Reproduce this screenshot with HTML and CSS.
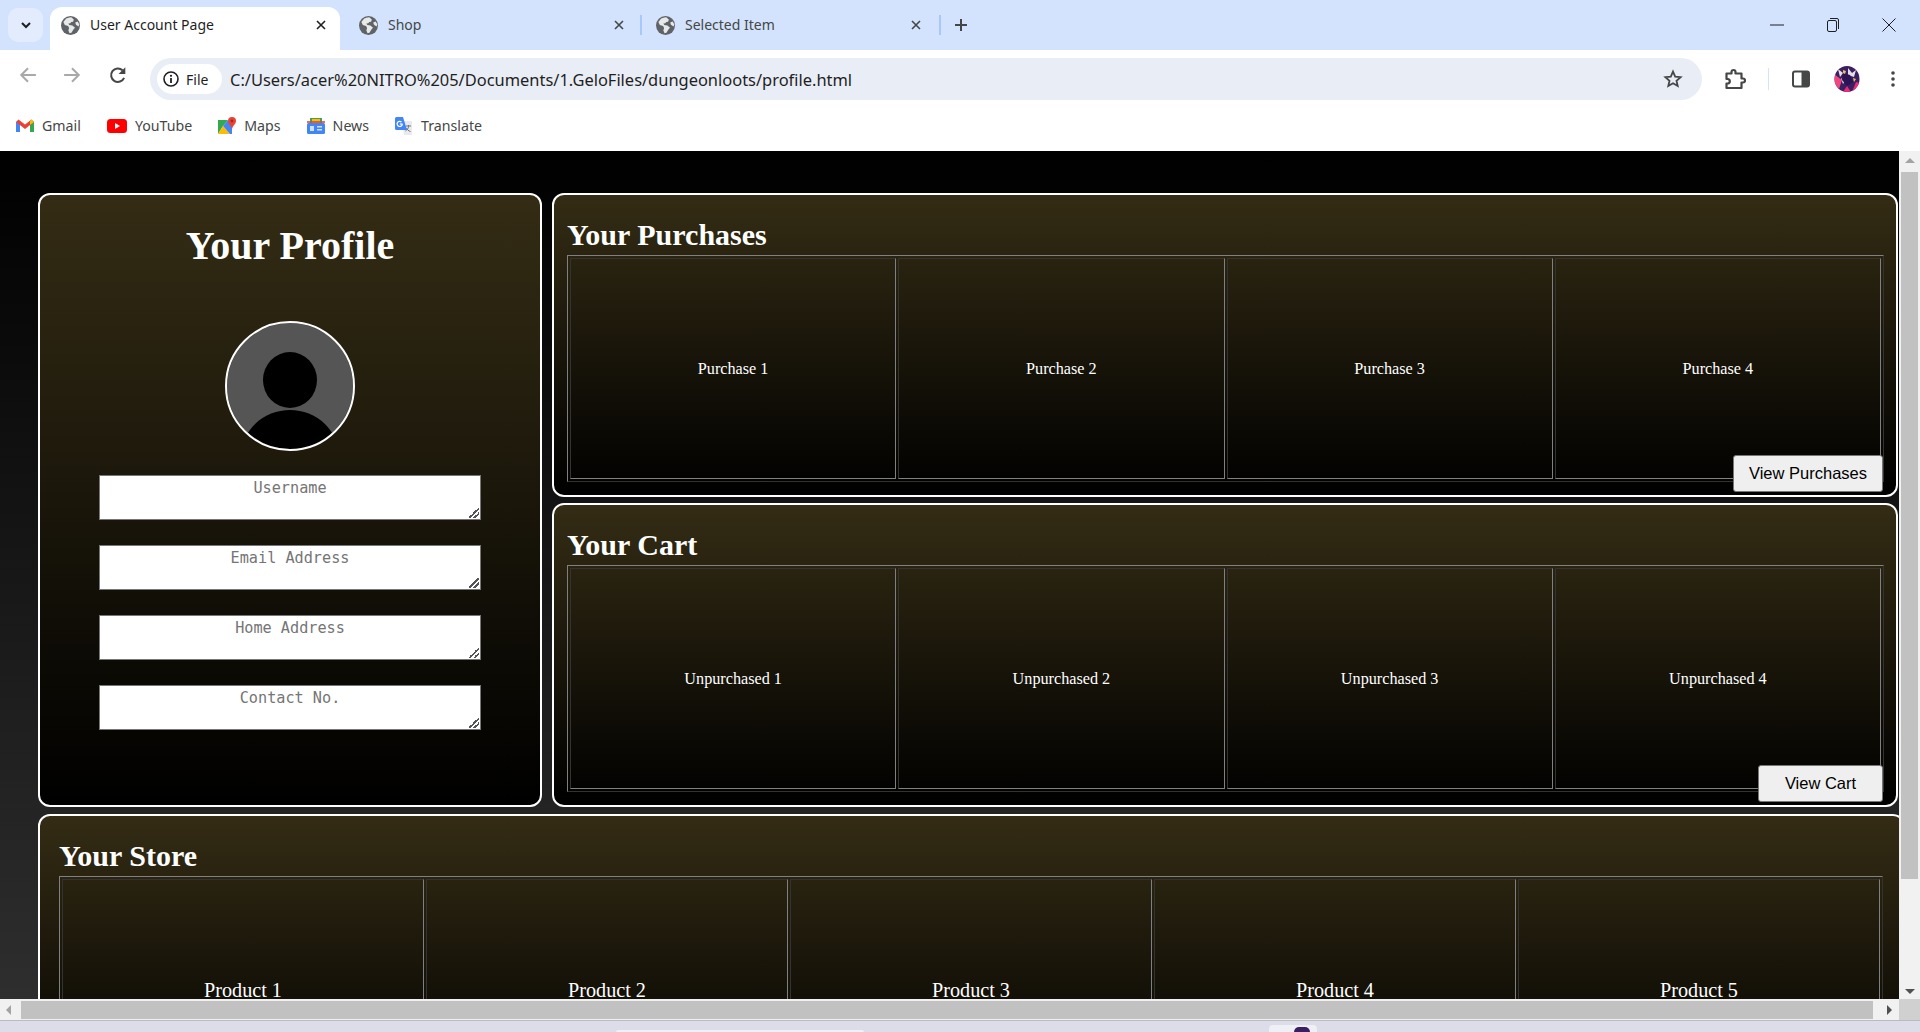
FILE: index.html
```html
<!DOCTYPE html>
<html lang="en">
<head>
  <meta charset="UTF-8">
  <title>User Account Page</title>
  <link rel="stylesheet" href="styles.css">
</head>
<body>
  <svg class="sprites" width="0" height="0" aria-hidden="true">
    <symbol id="globe" viewBox="0 0 16 16">
      <circle cx="8" cy="8" r="8" fill="#5f6368"/>
      <path d="M7 1.2 4.4 2.2 2 5l1.2 2.6L6 8.4l.8 1.6-.6 2.2 1 2.4 1.6-.4 1.8-3 1.2-1.4-2.2-1.8-2.6-.4-.8-1.2 1.6-.4.8-1 1.6-.2.6-1.8L8.600 1z" fill="#fff" opacity=".85"/>
      <path d="M14 4.600 12 5.400l.6 2 2.200 1.400.6-1.800z" fill="#fff" opacity=".85"/>
    </symbol>
    <symbol id="close" viewBox="0 0 10 10">
      <path d="M1 1l8 8M9 1 1 9" fill="none" stroke="currentColor" stroke-width="1.600"/>
    </symbol>
  </svg>

  <!-- TABS -->
  <header class="tabstrip">
    <button class="tab-list" type="button">
      <svg width="10" height="7" viewBox="0 0 10 7"><path d="M1 1l4 4 4-4" fill="none" stroke="#1f1f1f" stroke-width="2"/></svg>
    </button>
    <div class="tab tab-active">
      <svg class="favicon"><use href="#globe"/></svg>
      <span class="tab-title">User Account Page</span>
      <svg class="tab-close"><use href="#close"/></svg>
    </div>
    <div class="tab">
      <svg class="favicon"><use href="#globe"/></svg>
      <span class="tab-title">Shop</span>
      <svg class="tab-close"><use href="#close"/></svg>
    </div>
    <span class="tab-sep tab-sep-first"></span>
    <div class="tab">
      <svg class="favicon"><use href="#globe"/></svg>
      <span class="tab-title">Selected Item</span>
      <svg class="tab-close"><use href="#close"/></svg>
    </div>
    <span class="tab-sep tab-sep-last"></span>
    <svg class="new-tab" width="14" height="14" viewBox="0 0 14 14"><path d="M7 1v12M1 7h12" stroke="#444746" stroke-width="2"/></svg>
    <div class="window-controls">
      <svg width="14" height="14" viewBox="0 0 14 14"><path d="M0 7h14" stroke="#1f1f1f"/></svg>
      <svg width="14" height="16" viewBox="0 0 14 16"><rect x="1.500" y="3.500" width="9" height="11" rx="1.500" fill="none" stroke="#1f1f1f"/><path d="M4 1.500h7a1.500 1.500 0 0 1 1.500 1.500v9" fill="none" stroke="#1f1f1f"/></svg>
      <svg width="14" height="14" viewBox="0 0 14 14"><path d="M.5.500l13 13M13.500.500l-13 13" stroke="#1f1f1f"/></svg>
    </div>
  </header>

  <!-- TOOLBAR -->
  <nav class="toolbar">
    <svg class="nav-icon" viewBox="0 0 16 16"><path d="M15 8H2.500M8 2 2 8l6 6" fill="none" stroke="#a8a9aa" stroke-width="1.800"/></svg>
    <svg class="nav-icon nav-forward" viewBox="0 0 16 16"><path d="M1 8h12.500M8 2l6 6-6 6" fill="none" stroke="#a8a9aa" stroke-width="1.800"/></svg>
    <svg class="nav-icon" viewBox="0 0 16 16"><path d="M13.400 10.500A6 6 0 1 1 12 3.800" fill="none" stroke="#444746" stroke-width="1.800"/><path d="M14.500 1v6h-6z" fill="#444746"/></svg>
    <div class="omnibox">
      <span class="site-chip">
        <svg width="16" height="16" viewBox="0 0 16 16"><circle cx="8" cy="8" r="7" fill="none" stroke="#1f1f1f" stroke-width="1.600"/><path d="M8 7v5" stroke="#1f1f1f" stroke-width="1.800"/><circle cx="8" cy="4.800" r="1.100" fill="#1f1f1f"/></svg>
        File
      </span>
      <span class="url">C:/Users/acer%20NITRO%205/Documents/1.GeloFiles/dungeonloots/profile.html</span>
      <svg class="star" width="20" height="20" viewBox="0 0 20 20"><path d="M10 2.600l2.200 5 5.400.5-4.100 3.600 1.200 5.300L10 14.200 5.300 17l1.200-5.300-4.100-3.600 5.400-.5z" fill="none" stroke="#444746" stroke-width="1.800"/></svg>
    </div>
    <div class="toolbar-actions">
      <svg width="22" height="22" viewBox="0 0 22 22"><path d="M2.500 5.500h5V4a2 2 0 0 1 4 0v1.500h6v5H19a2 2 0 0 1 0 4h-1.500V20h-15v-4.500H4a2.300 2.300 0 0 0 0-4.500H2.500z" fill="none" stroke="#444746" stroke-width="2.200" stroke-linejoin="round"/></svg>
      <span class="action-sep"></span>
      <svg width="20" height="20" viewBox="0 0 20 20"><rect x="2" y="2.500" width="16" height="15" rx="2" fill="none" stroke="#444746" stroke-width="2"/><rect x="10.500" y="2.500" width="7.500" height="15" fill="#444746"/></svg>
      <svg class="profile-pic" width="26" height="26" viewBox="0 0 26 26">
        <defs><clipPath id="pic"><ellipse cx="13" cy="13" rx="12.500" ry="13"/></clipPath></defs>
        <g clip-path="url(#pic)">
          <rect width="26" height="26" fill="#3b1f63"/>
          <path d="M0 8l8 6-4 12H0z" fill="#f0457f"/>
          <path d="M18 26l4-10 4 1v9zM9 26l4-6 4 6z" fill="#ee2a7b"/>
          <path d="M4 3l5 4-3 4zM14 2l4 5 4-3-2 7-6-2zM7 12l4 3-2 3z" fill="#e6dfe8"/>
          <path d="M9 7l7 2 3 7-6 4-5-6z" fill="#2c1454"/>
          <path d="M9 4l3 1-1 3-2-1zM19 12l3 1-2 3z" fill="#e8c15a"/>
        </g>
      </svg>
      <svg width="4" height="16" viewBox="0 0 4 16"><circle cx="2" cy="2" r="1.800" fill="#444746"/><circle cx="2" cy="8" r="1.800" fill="#444746"/><circle cx="2" cy="14" r="1.800" fill="#444746"/></svg>
    </div>
  </nav>

  <!-- BOOKMARKS -->
  <div class="bookmarks">
    <a class="bookmark">
      <svg width="18" height="14" viewBox="0 0 18 14"><path d="M0 13V2.500L4 5v8z" fill="#4285f4"/><path d="M14 13V5l4-2.500V13z" fill="#34a853"/><path d="M0 3 2.500.500 9 5.500 15.500.500 18 3 9 10z" fill="#ea4335"/><path d="M15.500.500 18 3l-4 3V2z" fill="#fbbc04"/></svg>
      Gmail
    </a>
    <a class="bookmark">
      <svg width="20" height="14" viewBox="0 0 20 14"><rect width="20" height="14" rx="3.500" fill="#f00"/><path d="M8 4l5 3-5 3z" fill="#fff"/></svg>
      YouTube
    </a>
    <a class="bookmark">
      <svg width="18" height="18" viewBox="0 0 18 18"><path d="M0 3h10l-5 6-5 8z" fill="#34a853"/><path d="M5 9 0 17h12z" fill="#fbbc04"/><path d="M10 3 5 9l7 8h2V8z" fill="#4285f4"/><path d="M14 0a4 4 0 0 1 4 4c0 3-3 4-4 8-1-4-4-5-4-8a4 4 0 0 1 4-4z" fill="#ea4335"/><circle cx="14" cy="4" r="1.400" fill="#a52714"/></svg>
      Maps
    </a>
    <a class="bookmark">
      <svg width="18" height="16" viewBox="0 0 18 16"><path d="M3 0h12v6H3z" fill="#34a853"/><path d="M5 1h8v5H5z" fill="#fbbc04"/><path d="M0 3h18v2H0z" fill="#ea4335" opacity=".8"/><rect y="5" width="18" height="11" rx="1.500" fill="#4285f4"/><path d="M3 8h4v5H3zM10 8h5v1.500h-5zM10 11h5v1.500h-5z" fill="#cfe0fc"/></svg>
      News
    </a>
    <a class="bookmark">
      <svg width="18" height="18" viewBox="0 0 18 18"><path d="M7 4h9a1 1 0 0 1 1 1v12a1 1 0 0 1-1 1H9z" fill="#e8eaed"/><path d="M11 9h5M13.500 8v1.500c0 2-1.500 3.500-3 4.500M11.500 11c.5 1.500 2 3 4 3.500" fill="none" stroke="#70757a" stroke-width="1"/><path d="M1.500 0H8l4 13H1.500A1.500 1.500 0 0 1 0 11.500v-10A1.500 1.500 0 0 1 1.500 0z" fill="#4285f4"/><path d="M7.300 7A2.600 2.600 0 1 1 6.500 5" fill="none" stroke="#fff" stroke-width="1.200"/><path d="M4.800 7h2.700" stroke="#fff" stroke-width="1.200"/></svg>
      Translate
    </a>
  </div>

  <div class="browser-view">
    <main class="page">

      <div class="top-row">
        <!-- PROFILE -->
        <section class="panel profile">
          <h1>Your Profile</h1>
          <svg class="avatar" width="130" height="130" viewBox="0 0 130 130">
            <defs><clipPath id="face"><circle cx="65" cy="65" r="63"/></clipPath></defs>
            <circle cx="65" cy="65" r="63" fill="#555"/>
            <g clip-path="url(#face)">
              <ellipse cx="65" cy="59" rx="27" ry="28"/>
              <ellipse cx="65" cy="136" rx="49" ry="47"/>
            </g>
            <circle cx="65" cy="65" r="64" fill="none" stroke="#fff" stroke-width="2"/>
          </svg>
          <form class="profile-form">
            <textarea placeholder="Username"></textarea>
            <textarea placeholder="Email Address"></textarea>
            <textarea placeholder="Home Address"></textarea>
            <textarea placeholder="Contact No."></textarea>
          </form>
        </section>

        <div class="side">
          <!-- PURCHASES -->
          <section class="panel list-panel">
            <h2>Your Purchases</h2>
            <table>
              <tr>
                <td>Purchase 1</td>
                <td>Purchase 2</td>
                <td>Purchase 3</td>
                <td>Purchase 4</td>
              </tr>
            </table>
            <button class="view-btn view-purchases" type="button">View Purchases</button>
          </section>

          <!-- CART -->
          <section class="panel list-panel">
            <h2>Your Cart</h2>
            <table>
              <tr>
                <td>Unpurchased 1</td>
                <td>Unpurchased 2</td>
                <td>Unpurchased 3</td>
                <td>Unpurchased 4</td>
              </tr>
            </table>
            <button class="view-btn view-cart" type="button">View Cart</button>
          </section>
        </div>
      </div>

      <!-- STORE -->
      <section class="panel store">
        <h2>Your Store</h2>
        <table>
          <tr>
            <td>Product 1</td>
            <td>Product 2</td>
            <td>Product 3</td>
            <td>Product 4</td>
            <td>Product 5</td>
          </tr>
        </table>
      </section>

    </main>

    <div class="vscroll">
      <span class="arrow-up"></span>
      <span class="vthumb"></span>
      <span class="arrow-down"></span>
    </div>
    <div class="hscroll">
      <span class="arrow-left"></span>
      <span class="hthumb"></span>
      <span class="arrow-right"></span>
    </div>
    <div class="scroll-corner"></div>
  </div>

  <div class="taskbar-edge">
    <span class="task-thumb"></span>
    <span class="task-button"><span class="task-pic"></span></span>
  </div>
</body>
</html>
```

FILE: styles.css
```css
* {
  box-sizing: border-box;
}

html, body {
  height: 100%;
}

body {
  margin: 0;
  overflow: hidden;
  display: flex;
  flex-direction: column;
  font-family: "Noto Sans", Arial, sans-serif;
  background: #fff;
}

.sprites {
  display: block;
  height: 0;
}

/* tabs */
.tabstrip {
  height: 50px;
  flex: none;
  display: flex;
  align-items: flex-end;
  background: #d3e3fd;
  padding-left: 8px;
}

.tab-list {
  width: 35px;
  height: 34px;
  align-self: flex-start;
  margin: 8px 7px 0 0;
  padding: 0;
  border: none;
  border-radius: 10px;
  background: #e3ecfd;
  display: flex;
  align-items: center;
  justify-content: center;
}

.tab {
  width: 290px;
  height: 43px;
  display: flex;
  align-items: center;
  padding: 0 14px 7px 11px;
  color: #444746;
  font-size: 14px;
}

.tab-active {
  background: #fff;
  color: #1f1f1f;
  border-radius: 12px 12px 0 0;
  margin-right: 8px;
}

.favicon {
  width: 19px;
  height: 19px;
  flex: none;
}

.tab-title {
  flex: 1;
  margin: 0 0 2px 10px;
}

.tab-close {
  width: 10px;
  height: 10px;
  flex: none;
}

.tab-sep {
  width: 2px;
  height: 20px;
  align-self: flex-start;
  margin-top: 15px;
  background: #a8c7fa;
}

.tab-sep-first {
  margin-left: 2px;
  margin-right: 3px;
}

.tab-sep-last {
  margin-left: 4px;
}

.new-tab {
  align-self: flex-start;
  margin: 18px 0 0 13px;
}

.window-controls {
  margin-left: auto;
  align-self: flex-start;
  display: flex;
  align-items: center;
  gap: 42px;
  height: 50px;
  padding-right: 24px;
}

/* toolbar */
.toolbar {
  height: 50px;
  flex: none;
  display: flex;
  align-items: center;
  background: #fff;
  border-radius: 12px 12px 0 0;
  padding: 0 19px;
}

.nav-icon {
  width: 18px;
  height: 18px;
  margin-right: 26px;
  flex: none;
}

.nav-forward {
  margin-right: 28px;
}

.omnibox {
  width: 1552px;
  height: 42px;
  margin: 8px 0 0 -3px;
  background: #e9edf6;
  border-radius: 21px;
  display: flex;
  align-items: center;
  padding: 0 19px 0 7px;
  flex: none;
}

.site-chip {
  height: 30px;
  width: 65px;
  flex: none;
  border-radius: 15px;
  background: #fff;
  display: flex;
  align-items: center;
  gap: 7px;
  padding-left: 6px;
  color: #1f1f1f;
  font-size: 14px;
}

.url {
  flex: 1;
  margin-left: 8px;
  color: #1f1f1f;
  font-size: 16.450px;
  white-space: nowrap;
}

.star {
  flex: none;
}

.toolbar-actions {
  display: flex;
  align-items: center;
  margin: 8px 0 0 22px;
}

.action-sep {
  width: 1px;
  height: 22px;
  background: #d3e3fd;
  margin: 0 22px;
}

.profile-pic {
  margin: 0 31px 0 23px;
}

/* bookmarks */
.bookmarks {
  height: 51px;
  flex: none;
  display: flex;
  align-items: center;
  gap: 26px;
  padding: 0 0 0 16px;
  background: #fff;
}

.bookmark {
  display: flex;
  align-items: center;
  gap: 8px;
  color: #444746;
  font-size: 14.200px;
}

/* page + fake scrollbars */
.browser-view {
  height: 869px;
  flex: none;
  display: grid;
  grid-template-columns: 1fr 21px;
  grid-template-rows: 848px 21px;
}

.page {
  overflow: hidden;
  padding: 42px 0 0 38px;
  background: linear-gradient(#000, #2e2e2e);
  color: #fff;
  font-family: "Liberation Serif", "Times New Roman", serif;
}

.top-row {
  display: flex;
  gap: 10px;
  width: 1860px;
  height: 614px;
}

.panel {
  border: 2px solid #fff;
  border-radius: 12px;
  background: linear-gradient(#342c14, #000);
}

.profile {
  width: 504px;
  flex: none;
  display: flex;
  flex-direction: column;
  align-items: center;
}

.profile h1 {
  margin: 28px 0 53px;
  font-size: 40px;
  line-height: 45px;
}

.avatar {
  display: block;
  flex: none;
}

.profile-form {
  display: flex;
  flex-direction: column;
  gap: 25px;
  margin-top: 24px;
}

.profile-form textarea {
  display: block;
  width: 382px;
  height: 45px;
  margin: 0;
  padding: 3px 2px 2px;
  border: 1px solid #767676;
  border-radius: 0;
  background: #fff;
  font-family: "DejaVu Sans Mono", "Liberation Mono", monospace;
  font-size: 15.200px;
  text-align: center;
}

.profile-form textarea::-webkit-resizer {
  background: linear-gradient(135deg, transparent 45%, #555 45%, #555 56%, transparent 56%, transparent 70%, #555 70%, #555 81%, transparent 81%) right 1px bottom 1px / 10px 10px no-repeat;
}

.side {
  flex: 1;
  display: flex;
  flex-direction: column;
  gap: 6px;
}

.list-panel {
  position: relative;
  flex: 1;
  padding: 0 12px 0 13px;
}

.panel h2 {
  margin: 0;
  padding: 22px 0 2px;
  font-size: 30px;
  line-height: 36px;
}

table {
  width: 100%;
  table-layout: fixed;
  border-collapse: separate;
  border-spacing: 2px;
  border: 1px solid;
  border-color: #808080 #333 #333 #808080;
}

td {
  height: 221px;
  padding: 2px 0 0;
  border: 1px solid;
  border-color: #333 #808080 #808080 #333;
  text-align: center;
  font-size: 16.200px;
}

.view-btn {
  position: absolute;
  right: 13px;
  bottom: 3px;
  height: 37px;
  padding: 0 0 1px;
  border: 1px solid #767676;
  border-radius: 3px;
  background: #efefef;
  color: #000;
  font-family: "Liberation Sans", Arial, sans-serif;
  font-size: 16.500px;
}

.view-purchases {
  width: 150px;
}

.view-cart {
  width: 125px;
}

.store {
  width: 1867px;
  margin-top: 7px;
  padding: 0 20px 0 19px;
}

.store td {
  font-size: 20.200px;
}

.vscroll {
  background: #f1f1f1;
  display: flex;
  flex-direction: column;
  align-items: center;
  padding: 7px 0 5px;
}

.vthumb {
  width: 17px;
  height: 707px;
  margin-top: 9px;
  background: #c1c1c1;
}

.arrow-up, .arrow-down, .arrow-left, .arrow-right {
  width: 0;
  height: 0;
  border: 5px solid transparent;
}

.arrow-up {
  border-top: none;
  border-bottom-color: #a3a3a3;
}

.arrow-down {
  margin-top: auto;
  border-bottom: none;
  border-top-color: #505050;
}

.hscroll {
  background: #f1f1f1;
  display: flex;
  align-items: center;
  padding: 0 7px 0 6px;
}

.hthumb {
  width: 1852px;
  height: 18px;
  margin-left: 10px;
  background: #c1c1c1;
}

.arrow-left {
  border-left: none;
  border-right-color: #a3a3a3;
}

.arrow-right {
  margin-left: auto;
  border-right: none;
  border-left-color: #505050;
}

.scroll-corner {
  background: #d0d0d0;
}

/* sliver of the windows taskbar */
.taskbar-edge {
  flex: 1;
  display: flex;
  align-items: flex-end;
  background: #dcdde8;
  border-top: 1px solid #b9bac6;
  padding-left: 616px;
}

.task-thumb {
  width: 248px;
  height: 2px;
  background: #eff0f6;
  border-radius: 3px 3px 0 0;
}

.task-button {
  width: 48px;
  height: 7px;
  margin-left: 405px;
  padding-left: 25px;
  background: #eff0f6;
  border-radius: 4px 4px 0 0;
}

.task-pic {
  display: block;
  width: 16px;
  height: 5px;
  margin-top: 2px;
  background: #3b1f63;
  border-radius: 8px 8px 0 0;
}
```
